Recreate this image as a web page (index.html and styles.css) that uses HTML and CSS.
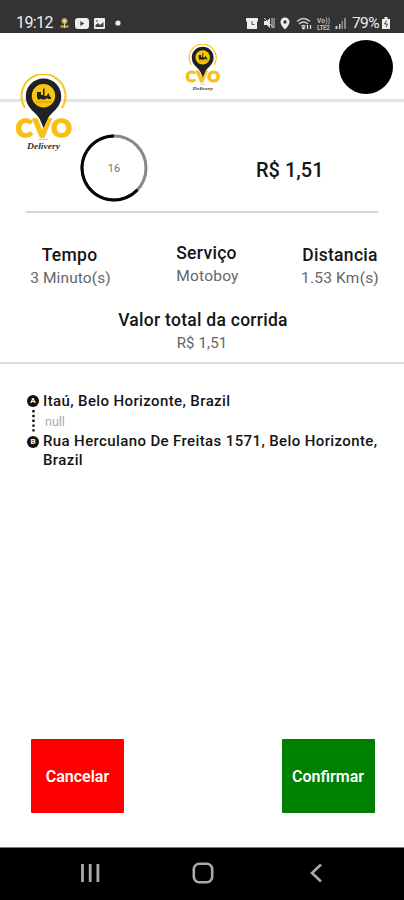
FILE: index.html
```
<!DOCTYPE html>
<html lang="pt-BR">
<head>
<meta charset="utf-8">
<meta name="viewport" content="width=device-width, initial-scale=1">
<title>CVO Delivery</title>
<link rel="stylesheet" href="styles.css">
</head>
<body>
<div class="screen">
  <header class="status">
    <span class="clock">19:12</span>
    <svg class="mini" viewBox="0 0 9 12"><circle cx="4.500" cy="4" r="3" fill="#b6a04b"/><circle cx="4.500" cy="4" r="1.300" fill="#eee"/><path d="M.5 9.500h8" stroke="#c39b22" stroke-width="2.500"/><path d="M4.500 6v5" stroke="#ddd"/></svg>
    <svg class="tube" viewBox="0 0 14 11"><rect width="14" height="11" rx="3" fill="#eee"/><path d="M5.300 3v5l4-2.500z" fill="#444"/></svg>
    <svg class="photo" viewBox="0 0 11 11"><rect width="11" height="11" rx="1" fill="#eee"/><path d="M1.500 9V7l2.500-2 2 2 3.500-3v5z" fill="#444"/><path d="M2 3h2" stroke="#444"/></svg>
    <svg class="dot" viewBox="0 0 6 6"><circle cx="3" cy="3" r="2.600" fill="#eee"/></svg>
    <div class="tray">
      <svg width="12" height="12" viewBox="0 0 12 12"><path d="M0 1h12v3l-1 1v7H1V5L0 4z" fill="#eee"/><path d="M6 4v3.500h2.500" fill="none" stroke="#555"/></svg>
      <svg width="12" height="12" viewBox="0 0 12 12"><path d="M1 4h3l3-3v10L4 8H1z" fill="#eee"/><path d="M1 1l10 10M9 1v10M11 1v10" stroke="#ccc"/></svg>
      <svg width="10" height="13" viewBox="0 0 10 13"><path d="M5 .5a4.500 4.500 0 0 0-4.500 4.500C.5 8 5 12.500 5 12.500S9.500 8 9.500 5A4.500 4.500 0 0 0 5 .5z" fill="#eee"/><circle cx="5" cy="5" r="1.700" fill="#333"/></svg>
      <svg class="wifi" width="16" height="13" viewBox="0 0 16 13"><path d="M1 4.500q6.500-6 13 0M3 7q4.500-4 9 0M5.500 9.500q2-2 4 0" fill="none" stroke="#ccc" stroke-width="1.400"/><circle cx="7.500" cy="11" r="1.500" fill="#ddd"/><path d="M11.500 8v4M14.500 8v4" stroke="#ddd" stroke-width="1.300"/></svg>
      <svg width="13" height="13" viewBox="0 0 13 13"><text x="0" y="6" class="lte" textLength="13">Vo))</text><text x="0" y="12.500" class="lte" textLength="13">LTE2</text></svg>
      <svg width="11" height="12" viewBox="0 0 11 12"><path d="M.5 9h2v3h-2zM4 7h1.500v5H4z" fill="#ccc"/><path d="M6.500 4H8v8H6.500zM9 1h2v11H9z" fill="#888"/></svg>
      <span class="charge">79%</span>
      <svg width="8" height="12" viewBox="0 0 8 12"><path d="M2.500 0h3v2H8v10H0V2h2.500z" fill="#eee"/><path d="M4.500 3.500L2.500 7h3L4 10" fill="none" stroke="#444"/></svg>
    </div>
  </header>
  <div class="appbar">
    <svg class="brand" viewBox="0 0 56 78"><use href="#logo"/></svg>
    <span class="avatar"></span>
    <svg class="float-brand" viewBox="0 0 56 78">
      <g id="logo">
        <path d="M9 34A22 22 0 1 1 46 34" fill="none" stroke="#f8c51c" stroke-width="1.900"/>
        <path d="M27.500 4.500C17.500 4.500 9.800 12.500 9.800 22c0 9 5 13 9.500 17.500C23 43 25.500 47 27.500 52c2-5 4.500-9 8.200-12.500C40.200 35 45.200 31 45.200 22c0-9.500-7.700-17.500-17.700-17.500z" fill="#202126"/>
        <circle cx="27.500" cy="21.800" r="11.700" fill="#f8c510"/>
        <path d="M21 18h4v3h2v-6l1.500-1v8h2l2-3 1.500 4h1v2h-3l-1-1-2 1.500h-3l-1-1-1 1h-2l-1-2z" fill="#262319"/>
        <path d="M20 28h16" stroke="#a8871a" stroke-width=".7"/>
        <text y="62.500" class="wordmark"><tspan x="0">C</tspan><tspan x="17.600">V</tspan><tspan x="35.500">O</tspan></text>
        <path d="M22.500 42h10.500L27.500 54z" fill="#202126"/>
        <path d="M23 65.300h9" stroke="#aaa" stroke-width=".8"/>
        <text x="11" y="74.500" textLength="33" lengthAdjust="spacingAndGlyphs" class="script">Delivery</text>
      </g>
    </svg>
  </div>
  <section class="fare">
    <div class="timer">
      <svg viewBox="0 0 68 68"><circle cx="34" cy="34" r="32" fill="none" stroke="#888" stroke-width="3"/><path d="M34 2A32 32 0 1 0 57.500 55.700" fill="none" stroke="#050505" stroke-width="3"/></svg>
      <span>16</span>
    </div>
    <strong>R$ 1,51</strong>
  </section>
  <section class="facts">
    <div class="fact time"><h2>Tempo</h2><p>3 Minuto(s)</p></div>
    <div class="fact service"><h2>Serviço</h2><p>Motoboy</p></div>
    <div class="fact distance"><h2>Distancia</h2><p>1.53 Km(s)</p></div>
  </section>
  <section class="total"><h2>Valor total da corrida</h2><p>R$ 1,51</p></section>
  <section class="route">
    <div class="rail">
      <span class="stop">A</span>
      <svg class="dots" viewBox="0 0 3 24"><path d="M1.500 1v23" stroke="#111" stroke-width="2.400" stroke-dasharray="2.400 2.400"/></svg>
      <span class="stop">B</span>
    </div>
    <div class="places">
      <p class="from">Itaú, Belo Horizonte, Brazil</p>
      <p class="note">null</p>
      <p class="to">Rua Herculano De Freitas 1571, Belo Horizonte,<br>Brazil</p>
    </div>
  </section>
  <div class="actions">
    <button class="cancel">Cancelar</button>
    <button class="confirm">Confirmar</button>
  </div>
  <nav class="system">
    <svg width="20" height="20" viewBox="0 0 20 20"><path d="M2.500 1v18M10.200 1v18M17.900 1v18" stroke="#aaa" stroke-width="2.800"/></svg>
    <svg width="22" height="22" viewBox="0 0 22 22"><rect x="1.800" y="1.800" width="18.400" height="18.400" rx="5.500" fill="none" stroke="#aaa" stroke-width="2.600"/></svg>
    <svg width="12" height="20" viewBox="0 0 12 20"><path d="M11 1.500L2 10l9 8.500" fill="none" stroke="#aaa" stroke-width="2.600"/></svg>
  </nav>
</div>
</body>
</html>
```
FILE: styles.css
```
* { box-sizing: border-box; }
body, h2, p { margin: 0; }
body { font-family: Roboto, sans-serif; background: #fff; color: #151515; }
svg { display: block; flex: none; }
.screen { width: 404px; height: 900px; display: flex; flex-direction: column; overflow: hidden; }
.script { font: italic bold 8px "Liberation Serif", serif; fill: #333; }
.wordmark { font: 900 25px Lato, sans-serif; fill: #f8c010; stroke: #f8c010; stroke-width: 1.6px; }

.status { height: 33px; flex: none; background: #333; display: flex; align-items: center; padding: 13px 14px 0 16px; color: #eee; }
.clock { font-size: 16px; line-height: 18px; width: 44px; letter-spacing: -0.6px; }
.mini { width: 9px; height: 12px; }
.tube { width: 14px; height: 11px; margin-left: 6px; }
.photo { width: 11px; height: 11px; margin-left: 5px; }
.dot { width: 6px; height: 6px; margin-left: 10px; }
.tray { margin-left: auto; display: flex; align-items: center; gap: 5px; }
.tray .wifi { margin-left: 1px; }
.lte { font: bold 6.5px Roboto, sans-serif; fill: #bbb; }
.charge { font-size: 15.5px; line-height: 18px; letter-spacing: -0.6px; margin: 0 -4px 0 1px; width: 29px; }

.appbar { position: relative; height: 69px; flex: none; border-bottom: 3px solid #e4e4e4; }
.brand { position: absolute; left: 185px; top: 11px; width: 36px; height: 48px; }
.avatar { position: absolute; left: 339px; top: 7px; width: 54px; height: 54px; border-radius: 50%; background: #000; }
.float-brand { position: absolute; left: 16px; top: 41px; width: 56px; height: 78px; z-index: 1; }

.fare { height: 111px; margin: 0 26px; flex: none; border-bottom: 2px solid #d6d6d6; display: flex; padding-left: 54px; padding-top: 32px; }
.timer { width: 68px; height: 68px; display: grid; place-items: center; }
.timer > * { grid-area: 1 / 1; }
.timer svg { width: 68px; height: 68px; }
.timer span { font-size: 11px; color: #777; }
.fare strong { margin-left: 108px; font-size: 20px; line-height: 24px; font-weight: 500; padding-top: 24px; white-space: nowrap; }

.facts { height: 90px; flex: none; display: grid; grid-template-columns: 89px 73px 86px; justify-content: space-between; padding: 31px 21px 0 26px; text-align: center; }
.fact { white-space: nowrap; display: flex; flex-direction: column; align-items: center; }
h2 { font-size: 17.5px; line-height: 23px; font-weight: 500; letter-spacing: .3px; }
.facts p, .total p { font-size: 15.5px; line-height: 22px; color: #666; letter-spacing: .2px; }
.time h2 { margin-left: -2px; }
.facts .time p { letter-spacing: .1px; }
.service { margin-top: -2px; }
.service p { margin-left: 3px; }
.service h2 { margin-left: 1px; }
.total { height: 61px; flex: none; border-bottom: 2px solid #dedede; padding-top: 6px; text-align: center; }
.total h2 { letter-spacing: .27px; padding-left: 2px; }
.total p { font-size: 15px; letter-spacing: .15px; }

.route { display: flex; padding: 28px 0 0 27px; height: 120px; flex: none; }
.rail { width: 12px; display: flex; flex-direction: column; align-items: center; padding-top: 3px; }
.stop { width: 12px; height: 12px; border-radius: 50%; background: #111; color: #fff; font-size: 8px; font-weight: 700; line-height: 12px; text-align: center; }
.dots { width: 3px; height: 24px; margin: 2px 0 3px; }
.places { padding-left: 4px; white-space: nowrap; }
.from, .to { font-size: 15px; line-height: 19px; font-weight: 500; letter-spacing: .38px; }
.note { font-size: 12.5px; line-height: 21px; color: #aaa; padding-left: 2px; }

.actions { margin-top: auto; display: flex; justify-content: space-between; padding: 0 29.500px 34.500px 31px; flex: none; }
button { width: 93px; height: 74px; padding: 2px 0 0; border: 0; border-radius: 1px; color: #fff; font: 600 16px Roboto, sans-serif; }
.cancel { background: #f00; }
.confirm { background: #008000; }
.system { height: 53px; flex: none; background: #000; border-top: 1px solid #777; display: grid; grid-template-columns: 20px 22px 12px; column-gap: 92px; align-items: center; padding: 0 0 3px 80px; }
.system svg:last-child { margin-left: 4px; }
```
